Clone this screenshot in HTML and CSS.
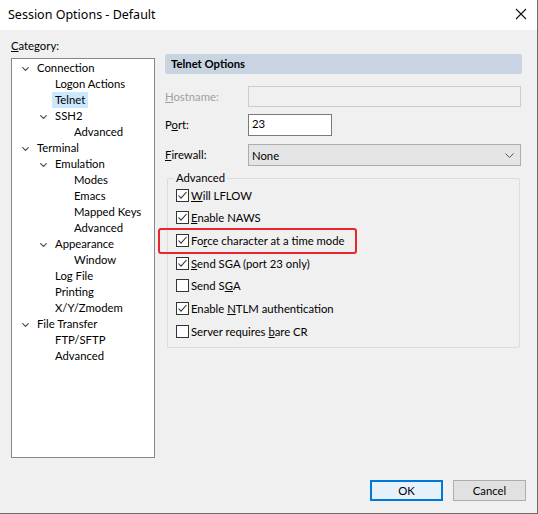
FILE: index.html
```html
<!DOCTYPE html>
<html>
<head>
<meta charset="utf-8">
<link rel="stylesheet" href="styles.css">
</head>
<body>
<div class="window">
  <div class="titlebar">
    <span class="title">Session Options - Default</span>
    <svg class="close" width="12" height="12" viewBox="0 0 12 12"><path d="M1 1L11 11M11 1L1 11" stroke="#111" stroke-width="1.1" fill="none"/></svg>
  </div>
  <div class="content">
    <div class="left">
      <div class="cat-label"><u>C</u>ategory:</div>
      <div class="tree">
        <div class="node l0"><span class="chev"></span>Connection</div>
        <div class="node l1">Logon Actions</div>
        <div class="node l1"><span class="sel">Telnet</span></div>
        <div class="node l1"><span class="chev"></span>SSH2</div>
        <div class="node l2">Advanced</div>
        <div class="node l0"><span class="chev"></span>Terminal</div>
        <div class="node l1"><span class="chev"></span>Emulation</div>
        <div class="node l2">Modes</div>
        <div class="node l2">Emacs</div>
        <div class="node l2">Mapped Keys</div>
        <div class="node l2">Advanced</div>
        <div class="node l1"><span class="chev"></span>Appearance</div>
        <div class="node l2">Window</div>
        <div class="node l1">Log File</div>
        <div class="node l1">Printing</div>
        <div class="node l1">X/Y/Zmodem</div>
        <div class="node l0"><span class="chev"></span>File Transfer</div>
        <div class="node l1">FTP/SFTP</div>
        <div class="node l1">Advanced</div>
      </div>
    </div>
    <div class="right">
      <div class="header">Telnet Options</div>
      <div class="form">
        <div class="row r-host"><span class="lbl disabled"><u>H</u>ostname:</span><div class="input disabled-in"></div></div>
        <div class="row r-port"><span class="lbl">P<u>o</u>rt:</span><div class="input port">23</div></div>
        <div class="row r-fw"><span class="lbl"><u>F</u>irewall:</span><div class="select"><span>None</span><svg width="9" height="5" viewBox="0 0 9 5"><path d="M0.5 0.5L4.5 4.5L8.5 0.5" stroke="#555" fill="none"/></svg></div></div>
      </div>
      <div class="group">
        <span class="legend">Advanced</span>
        <div class="cb on"><span class="box"></span><span><u>W</u>ill LFLOW</span></div>
        <div class="cb on"><span class="box"></span><span><u>E</u>nable NAWS</span></div>
        <div class="cb on"><span class="box"></span><span>Fo<u>r</u>ce character at a time mode</span></div>
        <div class="cb on"><span class="box"></span><span><u>S</u>end SGA (port 23 only)</span></div>
        <div class="cb"><span class="box"></span><span>Send S<u>G</u>A</span></div>
        <div class="cb on"><span class="box"></span><span>Enable <u>N</u>TLM authentication</span></div>
        <div class="cb"><span class="box"></span><span>Server requires <u>b</u>are CR</span></div>
      </div>
    </div>
  </div>
  <div class="footer">
    <div class="btn default">OK</div>
    <div class="btn">Cancel</div>
  </div>
  <div class="highlight"></div>
</div>
</body>
</html>
```
FILE: styles.css
```css
html, body {
  margin: 0;
  padding: 0;
}
body {
  font-family: "Lato", "Noto Sans", sans-serif;
  font-size: 11.3px;
  color: #000;
  width: 538px;
  height: 514px;
  overflow: hidden;
}
.window {
  position: relative;
  width: 537px;
  height: 513px;
  border-right: 1px solid #6b6b6b;
  border-bottom: 1px solid #6b6b6b;
  background: #f0f0f0;
  display: flex;
  flex-direction: column;
}
.titlebar {
  height: 30px;
  background: #fff;
  display: flex;
  align-items: center;
  justify-content: space-between;
  padding: 0 10px 0 8px;
  flex: none;
}
.title {
  font-family: "Noto Sans", sans-serif;
  font-size: 12.5px;
  line-height: 16px;
  margin-top: -1px;
}
.close {
  display: block;
  margin-top: -2px;
}
.content {
  display: flex;
  padding: 8px 0 0 11px;
  height: 420px;
}
.left {
  width: 144px;
  flex: none;
}
.cat-label {
  line-height: 16px;
  height: 20px;
}
.tree {
  box-sizing: border-box;
  height: 400px;
  background: #fff;
  border: 1px solid #828790;
  padding-top: 1px;
}
.node {
  height: 16px;
  line-height: 16px;
  position: relative;
  white-space: nowrap;
}
.node.l0 { padding-left: 25px; }
.node.l1 { padding-left: 43px; }
.node.l2 { padding-left: 62px; }
.chev {
  display: inline-block;
  width: 7px;
  height: 7px;
  margin-left: -15px;
  margin-right: 8px;
  vertical-align: top;
  margin-top: 5px;
  background: no-repeat center/7px 4px url("data:image/svg+xml;utf8,<svg xmlns='http://www.w3.org/2000/svg' width='7' height='4' viewBox='0 0 7 4'><path d='M0.3 0.3L3.5 3.4L6.7 0.3' stroke='%23505050' stroke-width='1.2' fill='none'/></svg>");
}
.sel {
  display: inline-block;
  background: #cce8ff;
  padding: 0 3px;
  margin-left: -3px;
}
.right {
  margin-left: 10px;
  width: 357px;
  flex: none;
  padding-top: 16px;
}
.header {
  height: 20px;
  line-height: 20px;
  background: #c9d4e2;
  font-weight: bold;
  padding-left: 6px;
  border-radius: 2px;
}
.form {
  padding-top: 12px;
  display: flex;
  flex-direction: column;
  gap: 7px;
}
.row {
  display: flex;
  align-items: center;
}
.lbl {
  width: 83px;
  flex: none;
  line-height: 16px;
}
.lbl.disabled { color: #a0a0a0; }
.input {
  box-sizing: border-box;
  height: 22px;
  border: 1px solid #7a7a7a;
  background: #fff;
  padding-left: 3px;
  line-height: 18px;
}
.disabled-in {
  width: 273px;
  height: 21px;
  border-color: #cccccc;
  background: #f0f0f0;
}
.port { width: 84px; }
.r-fw { margin-top: 1px; }
.select {
  box-sizing: border-box;
  width: 273px;
  height: 22px;
  border: 1px solid #adadad;
  background: #e5e5e5;
  display: flex;
  align-items: center;
  justify-content: space-between;
  padding: 0 6px 0 3px;
}
.select svg { display: block; }
.group {
  position: relative;
  margin: 12px 2px 0 2px;
  height: 170px;
  border: 1px solid #dcdcdc;
  border-radius: 2px;
  box-sizing: border-box;
  padding: 5px 0 0 8px;
}
.legend {
  position: absolute;
  top: -9px;
  left: 6px;
  padding: 0 2px;
  background: #f0f0f0;
  line-height: 16px;
}
.cb {
  height: 22.67px;
  display: flex;
  align-items: center;
  gap: 2px;
}
.box {
  box-sizing: border-box;
  width: 13px;
  height: 13px;
  border: 1px solid #333;
  background: #fff;
  flex: none;
}
.cb.on .box {
  background: #fff no-repeat center/11px 11px url("data:image/svg+xml;utf8,<svg xmlns='http://www.w3.org/2000/svg' width='11' height='11' viewBox='0 0 11 11'><path d='M1.5 5.5L4 8.2L9.5 2' stroke='%23333' stroke-width='1.1' fill='none'/></svg>");
}
.footer {
  flex: 1;
  display: flex;
  justify-content: flex-end;
  align-items: flex-end;
  gap: 10px;
  padding: 0 11px 12px 0;
}
.btn {
  box-sizing: border-box;
  width: 73px;
  height: 21px;
  border: 1px solid #adadad;
  background: #e1e1e1;
  text-align: center;
  line-height: 19px;
}
.btn.default {
  border-color: #0078d7;
  box-shadow: inset 0 0 0 1px #0078d7;
  background: #e5f1fb;
}
.highlight {
  position: absolute;
  left: 158px;
  top: 228px;
  width: 199px;
  height: 26px;
  box-sizing: border-box;
  border: 2px solid #e8262b;
  border-radius: 3px;
}
```
